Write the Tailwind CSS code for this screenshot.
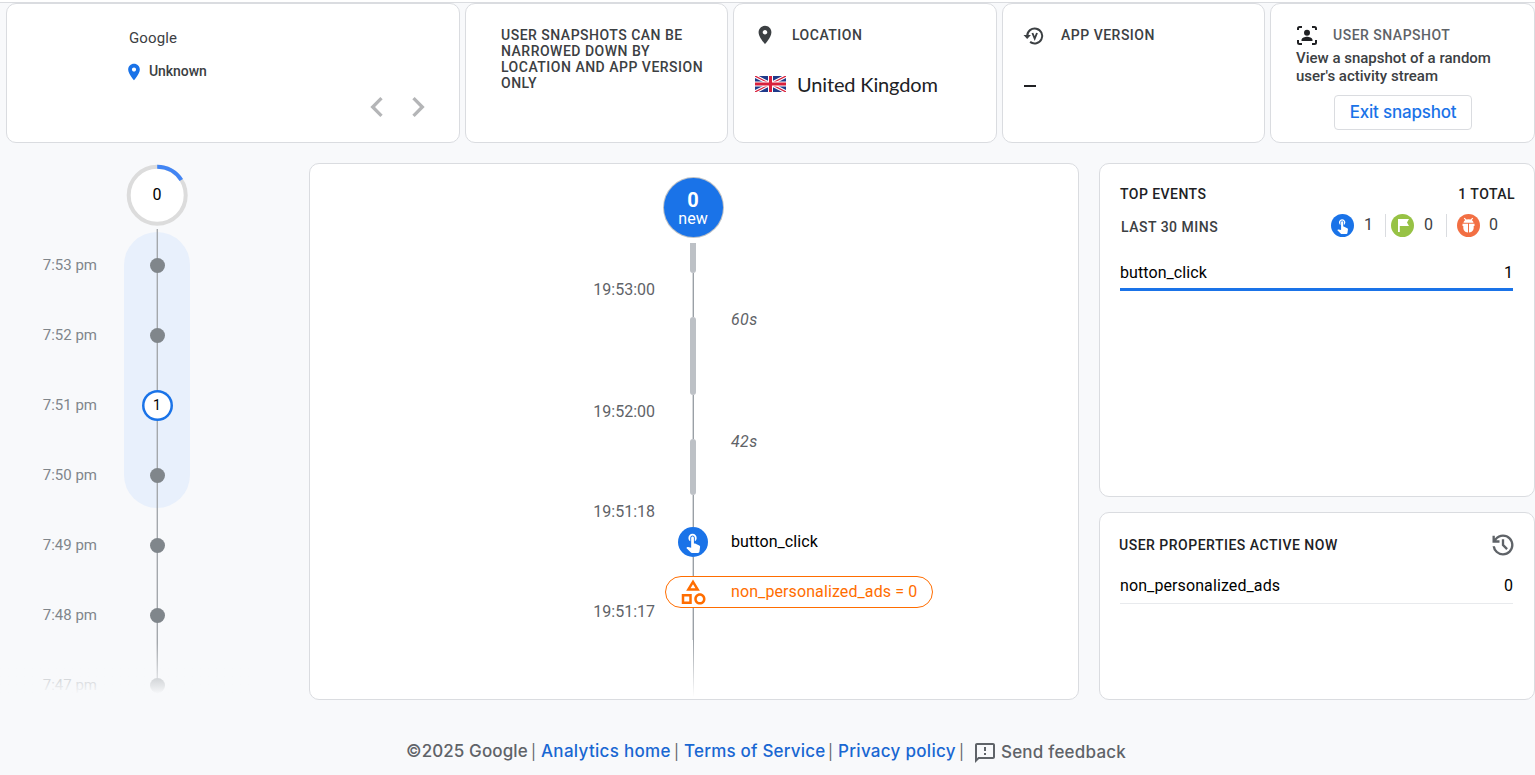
<!DOCTYPE html>
<html lang="en">
<head>
<meta charset="utf-8">
<title>Analytics – User snapshot</title>
<script src="https://cdn.jsdelivr.net/npm/@tailwindcss/browser@4"></script>
</head>
<body class="w-[1535px] h-[775px] overflow-hidden bg-[#f8f9fb] font-[Roboto,sans-serif] text-[#3c4043]">
<div class="h-[3px] bg-white border-b border-[#dadce0]"></div>

<!-- Summary cards -->
<section class="grid grid-cols-[454px_263px_264px_263px_265px] gap-[5px] pl-[6px] h-[140px]">
  <div class="flex flex-col bg-white border border-[#dadce0] rounded-[10px] pl-[122px] pt-[24px]">
    <span class="text-[15px] leading-5 tracking-[0.1px]">Google</span>
    <div class="flex items-center mt-[13px] h-5 -ml-[5px]">
      <svg class="size-5 mt-px fill-[#1a73e8]" viewBox="0 0 24 24"><path d="M12 2C8.130 2 5 5.130 5 9c0 5.250 7 13 7 13s7-7.750 7-13c0-3.870-3.130-7-7-7zm0 9.500c-1.380 0-2.500-1.120-2.500-2.500s1.120-2.500 2.500-2.500 2.500 1.120 2.500 2.500-1.120 2.500-2.500 2.500z"/></svg>
      <span class="ml-[5px] text-[14px] font-medium tracking-[-0.05px]">Unknown</span>
    </div>
    <div class="flex mt-[6px] ml-[228px] gap-px">
      <svg class="size-10 fill-[#b4b5b7]" viewBox="0 0 24 24"><path d="M15.410 7.410L14 6l-6 6 6 6 1.410-1.410L10.830 12z"/></svg>
      <svg class="size-10 fill-[#b4b5b7]" viewBox="0 0 24 24"><path d="M10 6L8.590 7.410 13.170 12l-4.580 4.590L10 18l6-6z"/></svg>
    </div>
  </div>
  <div class="bg-white border border-[#dadce0] rounded-[10px] pl-[35px] pt-[23px]">
    <p class="text-[14px] leading-4 font-medium tracking-[0.5px] whitespace-nowrap">USER SNAPSHOTS CAN BE<br>NARROWED DOWN BY<br>LOCATION AND APP VERSION<br>ONLY</p>
  </div>
  <div class="bg-white border border-[#dadce0] rounded-[10px] pl-[20px] pt-[20px]">
    <div class="flex items-center h-[22px]">
      <svg class="size-[22px] fill-[#3c4043]" viewBox="0 0 24 24"><path d="M12 2C8.130 2 5 5.130 5 9c0 5.250 7 13 7 13s7-7.750 7-13c0-3.870-3.130-7-7-7zm0 9.500c-1.380 0-2.500-1.120-2.500-2.500s1.120-2.500 2.500-2.500 2.500 1.120 2.500 2.500-1.120 2.500-2.500 2.500z"/></svg>
      <span class="ml-[16px] text-[14px] font-medium tracking-[0.5px]">LOCATION</span>
    </div>
    <div class="flex items-center mt-[24px] h-7">
      <svg class="w-[31px] h-[16px] ml-px" viewBox="0 0 62 32" preserveAspectRatio="none"><path fill="#1f3a8a" d="M0 0h62v32H0z"/><path stroke="#fff" stroke-width="7" d="M0 0l62 32M62 0L0 32"/><path stroke="#d8203c" stroke-width="2.500" d="M0 0l62 32M62 0L0 32"/><path stroke="#fff" stroke-width="10" d="M31 0v32M0 16h62"/><path stroke="#d8203c" stroke-width="6" d="M31 0v32M0 16h62"/></svg>
      <span class="ml-[11px] -mt-px font-[Lato,sans-serif] text-[20px] tracking-[-0.15px] text-[#202124]">United Kingdom</span>
    </div>
  </div>
  <div class="bg-white border border-[#dadce0] rounded-[10px] pl-[20px] pt-[20px]">
    <div class="flex items-center h-[22px]">
      <svg class="size-[22px] mt-px" viewBox="0 0 22 22" fill="none" stroke="#3c4043" stroke-width="2"><path d="M4.200 11a7.500 7.500 0 1 1 2.900 5.900"/><path fill="#3c4043" stroke="none" d="M.500 10h7.400l-3.700 3.900z"/><path stroke-width="1.900" d="M9.400 8l2.300 5.600L14 8"/></svg>
      <span class="ml-[16px] text-[14px] font-medium tracking-[0.5px]">APP VERSION</span>
    </div>
    <div class="w-3 h-[2px] mt-[39px] ml-px bg-[#202124]"></div>
  </div>
  <div class="bg-white border border-[#dadce0] rounded-[10px] pl-[25px] pt-[20px]">
    <div class="flex items-center h-[22px]">
      <svg class="size-[22px]" viewBox="0 0 22 22" fill="#202124"><path fill="none" stroke="#202124" stroke-width="2" d="M2 6V4.500Q2 3 3.500 3H6M16 3h2.500Q20 3 20 4.500V6M20 16v2.500q0 1.500-1.500 1.500H16M6 20H3.500Q2 20 2 18.500V16"/><circle cx="11" cy="8.700" r="3"/><path d="M5.500 17v-1c0-2 3.500-3.200 5.500-3.200s5.500 1.200 5.500 3.200v1z"/></svg>
      <span class="ml-[15px] text-[14px] font-medium tracking-[0.5px] text-[#5f6368]">USER SNAPSHOT</span>
    </div>
    <p class="mt-[3px] text-[15px] leading-[18px] font-medium whitespace-nowrap">View a snapshot of a random<br>user's activity stream</p>
    <button class="flex items-center justify-center mt-[10px] ml-[38px] w-[138px] h-[35px] border border-[#dadce0] rounded-[4px] font-[Inter,sans-serif] text-[17px] tracking-[-0.2px] font-medium text-[#1a73e8] whitespace-nowrap">Exit snapshot</button>
  </div>
</section>

<main class="grid grid-cols-[309px_770px_436px] mt-[20px] h-[537px]">
  <!-- Minute by minute timeline -->
  <section class="relative overflow-hidden">
    <div class="absolute left-[124px] top-[69px] w-[66px] h-[276px] rounded-full bg-[#e8f0fc]"></div>
    <div class="absolute left-[157px] top-[66px] w-px h-[471px] bg-[#a4a8ac] shadow-[-1px_0_0_#a4a8ac66]"></div>
    <div class="relative pt-[1px] pl-[126px]">
      <div class="relative flex items-center justify-center size-[62px]">
        <svg class="absolute inset-0 size-[62px]" viewBox="0 0 62 62"><circle cx="31.200" cy="31.300" r="28.500" fill="#fff" stroke="#dcdcdc" stroke-width="4"/><path fill="none" stroke="#4285f4" stroke-width="4" d="M31.200 2.800A28.500 28.500 0 0 1 55.300 16"/></svg>
        <span class="relative text-[16px] text-black">0</span>
      </div>
    </div>
    <div class="relative mt-[4px] text-[15px] text-[#80868b]">
      <div class="grid grid-cols-[97px_120px] h-[70px] items-center"><span class="text-right">7:53 pm</span><i class="justify-self-center size-[15px] rounded-full bg-[#80868b]"></i></div>
      <div class="grid grid-cols-[97px_120px] h-[70px] items-center"><span class="text-right">7:52 pm</span><i class="justify-self-center size-[15px] rounded-full bg-[#80868b]"></i></div>
      <div class="grid grid-cols-[97px_120px] h-[70px] items-center"><span class="text-right">7:51 pm</span><b class="justify-self-center flex items-center justify-center size-[31px] rounded-full bg-white shadow-[inset_0_0_0_2.5px_#1a73e8] font-normal text-[14px] text-black">1</b></div>
      <div class="grid grid-cols-[97px_120px] h-[70px] items-center"><span class="text-right">7:50 pm</span><i class="justify-self-center size-[15px] rounded-full bg-[#80868b]"></i></div>
      <div class="grid grid-cols-[97px_120px] h-[70px] items-center"><span class="text-right">7:49 pm</span><i class="justify-self-center size-[15px] rounded-full bg-[#80868b]"></i></div>
      <div class="grid grid-cols-[97px_120px] h-[70px] items-center"><span class="text-right">7:48 pm</span><i class="justify-self-center size-[15px] rounded-full bg-[#80868b]"></i></div>
      <div class="grid grid-cols-[97px_120px] h-[70px] items-center"><span class="text-right">7:47 pm</span><i class="justify-self-center size-[15px] rounded-full bg-[#80868b]"></i></div>
    </div>
    <div class="absolute left-0 bottom-0 w-[256px] h-[57px] bg-linear-to-b from-[#f8f9fb]/0 to-[#f8f9fb] to-90%"></div>
  </section>

  <!-- Second by second stream -->
  <section class="relative grid grid-cols-[345px_76px_1fr] bg-white border border-[#dadce0] rounded-[10px] text-[16px] leading-5">
    <div class="flex flex-col items-end pt-[116px] text-[#5f6368]">
      <span>19:53:00</span><span class="mt-[102px]">19:52:00</span><span class="mt-[80px]">19:51:18</span><span class="mt-[80px]">19:51:17</span>
    </div>
    <div class="flex flex-col items-center pt-[14px]">
      <div class="flex flex-col items-center justify-center size-[59px] rounded-full bg-[#1a73e8] text-white ring-1 ring-[#bdc1c6]"><b class="text-[20px] leading-5 mt-[2px]">0</b><span class="leading-[17px]">new</span></div>
      <div class="flex flex-col items-center mt-[6px]">
        <i class="w-[6.600px] h-[30px] rounded-b-[3px] bg-[#bdc1c6]"></i>
        <i class="w-px h-[44px] bg-[#9aa0a6] shadow-[-1px_0_0_#9aa0a666]"></i>
        <i class="w-[6.600px] h-[78px] rounded-[3px] bg-[#bdc1c6]"></i>
        <i class="w-px h-[44px] bg-[#9aa0a6] shadow-[-1px_0_0_#9aa0a666]"></i>
        <i class="w-[6.600px] h-[56px] rounded-[3px] bg-[#bdc1c6]"></i>
        <i class="w-px h-[32px] bg-[#9aa0a6] shadow-[-1px_0_0_#9aa0a666]"></i>
        <div class="flex items-center justify-center size-[30px] rounded-full bg-[#1a73e8]"><svg class="size-[22px] fill-white" viewBox="0 0 24 24"><path d="M9 11.240V7.500C9 6.120 10.120 5 11.500 5S14 6.120 14 7.500v3.740c1.210-.810 2-2.180 2-3.740C16 5.010 13.990 3 11.500 3S7 5.010 7 7.500c0 1.560.790 2.930 2 3.740zm9.840 4.630l-4.540-2.260c-.170-.070-.350-.110-.540-.110H13v-6c0-.830-.670-1.500-1.500-1.500S10 6.670 10 7.500v10.740l-3.430-.720c-.080-.010-.150-.030-.240-.030-.310 0-.590.130-.790.330l-.790.800 4.940 4.940c.270.270.650.440 1.060.440h6.790c.750 0 1.330-.550 1.440-1.280l.750-5.270c.010-.070.020-.140.020-.200 0-.620-.380-1.160-.910-1.380z"/></svg></div>
        <i class="w-px h-[83px] bg-[#9aa0a6] shadow-[-1px_0_0_#9aa0a666]"></i>
        <i class="w-px h-[57px] bg-linear-to-b from-[#9aa0a6] to-transparent"></i>
      </div>
    </div>
    <div class="flex flex-col pt-[146px]">
      <span class="italic text-[#5f6368] tracking-[0.4px]">60s</span><span class="italic text-[#5f6368] tracking-[0.4px] mt-[102px]">42s</span><span class="mt-[80px] text-black tracking-[0.08px]">button_click</span>
    </div>
    <div class="absolute left-[355px] top-[412px] flex items-center w-[268px] h-[32px] rounded-full bg-white border-[1.500px] border-[#ff6d00] text-[#ff6d00]">
      <svg class="ml-[12px] size-[30px] fill-[#ff6d00]" viewBox="0 0 24 24"><path fill-rule="evenodd" d="M12 2l-5.500 9h11L12 2zm0 3.840L13.930 9h-3.870L12 5.840zM17.500 13c-2.490 0-4.500 2.010-4.500 4.500s2.010 4.500 4.500 4.500 4.500-2.010 4.500-4.500-2.010-4.500-4.500-4.500zm0 7c-1.380 0-2.500-1.120-2.500-2.500s1.120-2.500 2.500-2.500 2.500 1.120 2.500 2.500-1.120 2.500-2.500 2.500zM3 21.500h8v-8H3v8zm2-6h4v4H5v-4z"/></svg>
      <span class="ml-[23px] -mt-px whitespace-nowrap tracking-[0.1px]">non_personalized_ads = 0</span>
    </div>
  </section>

  <!-- Side panels -->
  <aside class="flex flex-col gap-[15px] pl-[20px] w-[456px] text-black">
    <section class="h-[334px] bg-white border border-[#dadce0] rounded-[10px] pl-[20px] pr-[21px] pt-[20px]">
      <div class="flex justify-between h-5 items-center text-[14px] font-medium tracking-[0.45px] text-[#202124]"><span>TOP EVENTS</span><span class="-mr-[2px]">1 TOTAL</span></div>
      <div class="flex items-center mt-[8px] h-[26px] text-[16px] text-[#3c4043]">
        <span class="mt-[4px] ml-px w-[210px] text-[14px] font-medium tracking-[0.5px]">LAST 30 MINS</span>
        <div class="flex items-center justify-center size-[23px] rounded-full bg-[#1a73e8]"><svg class="size-[17px] fill-white" viewBox="0 0 24 24"><path d="M9 11.240V7.500C9 6.120 10.120 5 11.500 5S14 6.120 14 7.500v3.740c1.210-.810 2-2.180 2-3.740C16 5.010 13.990 3 11.500 3S7 5.010 7 7.500c0 1.560.790 2.930 2 3.740zm9.840 4.630l-4.540-2.260c-.170-.070-.350-.110-.540-.110H13v-6c0-.830-.670-1.500-1.500-1.500S10 6.670 10 7.500v10.740l-3.430-.720c-.080-.010-.150-.030-.240-.030-.310 0-.590.130-.790.330l-.790.800 4.940 4.940c.270.270.650.440 1.060.440h6.790c.750 0 1.330-.550 1.440-1.280l.750-5.270c.010-.070.020-.140.020-.200 0-.620-.380-1.160-.910-1.380z"/></svg></div>
        <span class="ml-[10px] w-[21px]">1</span>
        <i class="w-px h-[23px] bg-[#dadce0] mr-[5px]"></i>
        <svg class="size-[23px]" viewBox="0 0 23 23"><circle cx="11.500" cy="11.500" r="11.500" fill="#97c245"/><path fill="#fff" d="M7 5h11l-2 3.500 2 3.500H8.800V18H7z"/></svg>
        <span class="ml-[10px] w-[22px]">0</span>
        <i class="w-px h-[23px] bg-[#dadce0] mr-[10px]"></i>
        <svg class="size-[23px]" viewBox="0 0 23 23"><circle cx="11.500" cy="11.500" r="11.500" fill="#f26f43"/><path fill="#fff" d="M6.500 8.800a5 3.600 0 0 1 10 0zM5.500 9.700h5.500v8.800C7.600 18.300 6.300 16 6.300 13.500V12h-.8zM12 9.700h5.500V12h-.8v1.500c0 2.500-1.300 4.800-4.700 5z"/><path stroke="#fff" stroke-width="1.200" d="M7.200 4.200l2 2M15.800 4.200l-2 2"/></svg>
        <span class="ml-[9px]">0</span>
      </div>
      <div class="flex justify-between items-center mt-[20px] h-[33px] border-b-[3px] border-[#1a73e8] pb-px text-[16px]"><span class="tracking-[0.08px]">button_click</span><span>1</span></div>
    </section>
    <section class="h-[188px] bg-white border border-[#dadce0] rounded-[10px] pl-[20px] pr-[21px] pt-[18px]">
      <div class="flex justify-between h-[28px] items-center text-[14px] font-medium tracking-[0.5px] text-[#202124]"><span class="-ml-px">USER PROPERTIES ACTIVE NOW</span>
        <svg class="size-[28px] -mr-[4px] fill-[#5f6368]" viewBox="0 -960 960 960"><path d="M480-120q-138 0-240.500-91.500T122-440h82q14 104 92.500 172T480-200q117 0 198.500-81.500T760-480q0-117-81.500-198.500T480-760q-69 0-129 32t-101 88h110v80H120v-240h80v94q51-64 124.500-99T480-840q75 0 140.500 28.500t114 77q48.500 48.500 77 114T840-480q0 75-28.500 140.500t-77 114q-48.500 48.500-114 77T480-120Zm112-192L440-464v-216h80v184l128 128-56 56Z"/></svg></div>
      <div class="flex justify-between items-center mt-[13px] h-8 border-b border-[#e8eaed] pb-[4px] text-[16px]"><span class="tracking-[0.1px]">non_personalized_ads</span><span>0</span></div>
    </section>
  </aside>
</main>

<footer class="flex items-center mt-[40px] ml-[406px] h-6 font-[Inter,sans-serif] text-[17px] tracking-[0.2px] font-medium text-[#5f6368] whitespace-nowrap">
  <span class="w-[125px] tracking-[0.1px]">©2025 Google</span><span class="w-[10px] text-[15px] font-normal">|</span>
  <a class="w-[133px] tracking-[0.3px] text-[#1967d2]">Analytics home</a><span class="w-[10px] text-[15px] font-normal">|</span>
  <a class="w-[144px] text-[#1967d2]">Terms of Service</a><span class="w-[10px] text-[15px] font-normal">|</span>
  <a class="w-[121px] tracking-[0.3px] text-[#1967d2]">Privacy policy</a><span class="w-[14px] text-[15px] font-normal">|</span>
  <svg class="size-6 mt-px fill-[#5f6368]" viewBox="0 0 24 24"><path d="M20 2H4c-1.100 0-1.990.900-1.990 2L2 22l4-4h14c1.100 0 2-.900 2-2V4c0-1.100-.900-2-2-2zm0 14H5.170L4 17.170V4h16v12zm-9-4h2v2h-2zm0-6h2v4h-2z"/></svg>
  <span class="ml-[4px] mt-px">Send feedback</span>
</footer>
</body>
</html>
